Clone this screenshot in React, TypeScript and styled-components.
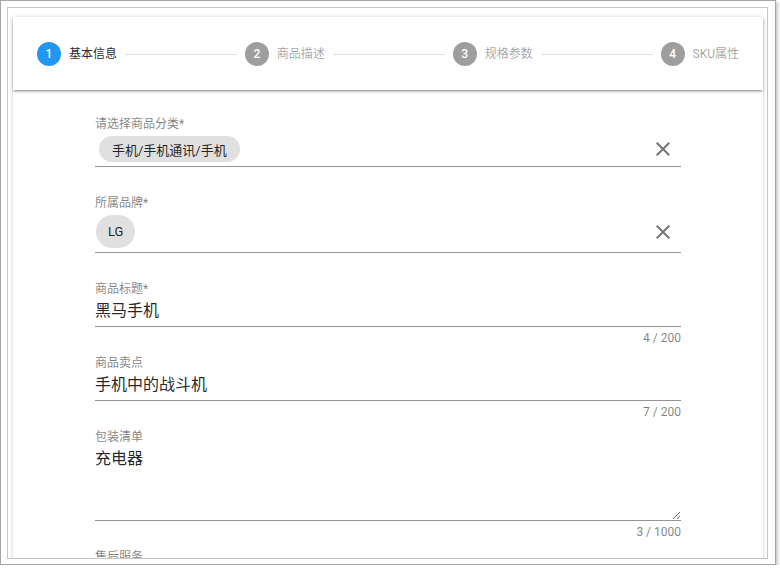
import styled, { createGlobalStyle } from 'styled-components';

const steps = [
  { n: 1, label: '基本信息', active: true },
  { n: 2, label: '商品描述', active: false },
  { n: 3, label: '规格参数', active: false },
  { n: 4, label: 'SKU属性', active: false },
];

const GlobalStyle = createGlobalStyle`
  html, body {
    margin: 0;
    padding: 0;
    background: #fff;
  }
  body {
    font-family: Roboto, "Noto Sans CJK SC", sans-serif;
    -webkit-font-smoothing: antialiased;
  }
  * {
    box-sizing: border-box;
  }
`;

const OuterFrame = styled.div`
  width: 776px;
  height: 565px;
  display: flex;
  padding: 6px 7px 5px 6px;
  border: 1px solid #a5a5a5;
  background: #fff;
  box-shadow: 2px 2px 3px rgba(0, 0, 0, 0.22);
`;

const InnerFrame = styled.div`
  flex: 1;
  display: flex;
  padding: 9px 4px 0 5px;
  border: 1px solid #c6c6c6;
  overflow: hidden;
  background: #fff;
`;

const Stepper = styled.div`
  flex: 1;
  min-height: 620px;
  background: #fff;
  box-shadow: 0 3px 1px -2px rgba(0, 0, 0, 0.2), 0 2px 2px 0 rgba(0, 0, 0, 0.14),
    0 1px 5px 0 rgba(0, 0, 0, 0.12);
`;

const StepperHeader = styled.div`
  display: flex;
  align-items: center;
  height: 73px;
  padding: 1px 24px 0;
  box-shadow: 0 3px 1px -2px rgba(0, 0, 0, 0.2), 0 2px 2px 0 rgba(0, 0, 0, 0.14),
    0 1px 5px 0 rgba(0, 0, 0, 0.12);
`;

const Step = styled.div`
  display: flex;
  align-items: center;
`;

const StepCircle = styled.span<{ $active: boolean }>`
  width: 24px;
  height: 24px;
  border-radius: 50%;
  margin-right: 8px;
  display: flex;
  align-items: center;
  justify-content: center;
  font-size: 12px;
  font-weight: 500;
  color: #fff;
  background: ${(p) => (p.$active ? '#2196f3' : '#9e9e9e')};
`;

const StepLabel = styled.span<{ $active: boolean }>`
  font-size: 12px;
  line-height: 14px;
  color: ${(p) => (p.$active ? 'rgba(0, 0, 0, 0.87)' : 'rgba(0, 0, 0, 0.38)')};
`;

const StepDivider = styled.div`
  flex: 1;
  height: 1px;
  margin: 0 8px;
  background: rgba(0, 0, 0, 0.12);
`;

const StepContent = styled.div`
  padding-top: 27px;
`;

const Form = styled.div`
  width: 586px;
  margin: 0 auto;
`;

const Field = styled.div`
  margin-bottom: 11px;
`;

const Label = styled.div`
  font-size: 12px;
  line-height: 14px;
  height: 14px;
  margin-bottom: 4px;
  color: rgba(0, 0, 0, 0.5);
`;

const Control = styled.div<{ $chips?: boolean }>`
  display: flex;
  align-items: center;
  padding: ${(p) => (p.$chips ? '1px 0 4px' : '0 0 4px')};
  border-bottom: 1px solid rgba(0, 0, 0, 0.42);
`;

const Value = styled.div`
  flex: 1;
  font-size: 16px;
  line-height: 22px;
  height: 22px;
  color: rgba(0, 0, 0, 0.87);
`;

const ChipList = styled.div`
  flex: 1;
  display: flex;
`;

const Chip = styled.span<{ $small?: boolean; $offset: number }>`
  display: inline-flex;
  align-items: center;
  height: ${(p) => (p.$small ? '26px' : '33px')};
  padding: 0 ${(p) => (p.$small ? '13px' : '12px')};
  margin-left: ${(p) => p.$offset}px;
  border-radius: 17px;
  background: #e0e0e0;
  font-size: 13px;
  color: rgba(0, 0, 0, 0.87);
`;

const ClearButton = styled.span`
  display: flex;
  width: 24px;
  height: 24px;
  margin-right: 6px;
  color: rgba(0, 0, 0, 0.54);
`;

const TextArea = styled.textarea`
  display: block;
  flex: 1;
  height: 72px;
  margin: 0 0 -4px;
  padding: 0;
  border: none;
  outline: none;
  resize: vertical;
  background: transparent;
  font-family: Roboto, "Noto Sans CJK SC", sans-serif;
  font-size: 16px;
  line-height: 22px;
  color: rgba(0, 0, 0, 0.87);
`;

const Details = styled.div`
  height: 14px;
  margin-top: 4px;
  font-size: 12px;
  line-height: 14px;
  text-align: right;
  color: rgba(0, 0, 0, 0.5);
`;

const CloseIcon = () => (
  <svg width="24" height="24" viewBox="0 0 24 24" fill="currentColor">
    <path d="M19,6.41L17.59,5L12,10.59L6.41,5L5,6.41L10.59,12L5,17.59L6.41,19L12,13.41L17.59,19L19,17.59L13.41,12L19,6.41Z" />
  </svg>
);

const App = () => {
  return (
    <>
      <GlobalStyle />
      <OuterFrame>
        <InnerFrame>
          <Stepper>
            <StepperHeader>
              {steps.map((s, i) => (
                <>
                  {i > 0 && <StepDivider key={`d${s.n}`} />}
                  <Step key={s.n}>
                    <StepCircle $active={s.active}>{s.n}</StepCircle>
                    <StepLabel $active={s.active}>{s.label}</StepLabel>
                  </Step>
                </>
              ))}
            </StepperHeader>
            <StepContent>
              <Form>
                <Field>
                  <Label>请选择商品分类*</Label>
                  <Control $chips>
                    <ChipList>
                      <Chip $small $offset={4}>手机/手机通讯/手机</Chip>
                    </ChipList>
                    <ClearButton>
                      <CloseIcon />
                    </ClearButton>
                  </Control>
                  <Details />
                </Field>
                <Field>
                  <Label>所属品牌*</Label>
                  <Control $chips>
                    <ChipList>
                      <Chip $offset={1}>LG</Chip>
                    </ChipList>
                    <ClearButton>
                      <CloseIcon />
                    </ClearButton>
                  </Control>
                  <Details />
                </Field>
                <Field>
                  <Label>商品标题*</Label>
                  <Control>
                    <Value>黑马手机</Value>
                  </Control>
                  <Details>4 / 200</Details>
                </Field>
                <Field>
                  <Label>商品卖点</Label>
                  <Control>
                    <Value>手机中的战斗机</Value>
                  </Control>
                  <Details>7 / 200</Details>
                </Field>
                <Field>
                  <Label>包装清单</Label>
                  <Control>
                    <TextArea defaultValue="充电器" />
                  </Control>
                  <Details>3 / 1000</Details>
                </Field>
                <Field>
                  <Label>售后服务</Label>
                </Field>
              </Form>
            </StepContent>
          </Stepper>
        </InnerFrame>
      </OuterFrame>
    </>
  );
};

export default App;
